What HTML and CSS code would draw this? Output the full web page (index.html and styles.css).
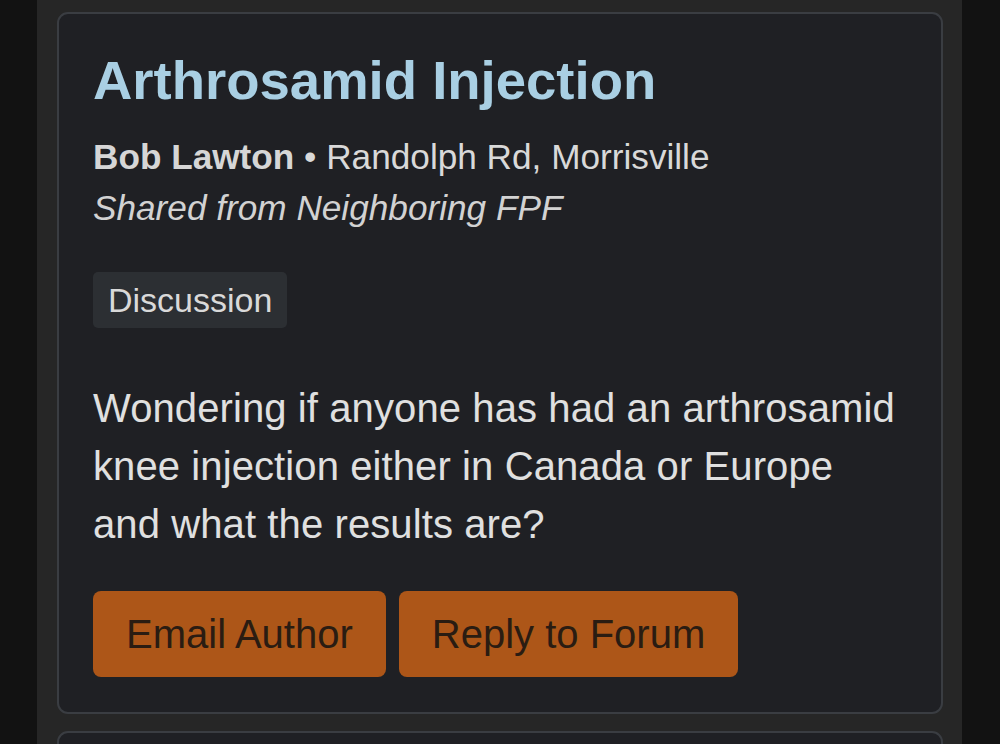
FILE: index.html
```html
<!DOCTYPE html>
<html lang="en">
<head>
  <meta charset="UTF-8">
  <meta name="viewport" content="width=device-width, initial-scale=1.0">
  <title>Arthrosamid Injection</title>
  <link rel="stylesheet" href="styles.css">
</head>
<body>
  <div class="feed">
    <div class="post">
      <h1 class="post-title">Arthrosamid Injection</h1>
      <div class="meta"><b>Bob Lawton</b> &bull; Randolph Rd, Morrisville</div>
      <div class="shared">Shared from Neighboring FPF</div>
      <span class="tag">Discussion</span>
      <p class="body-text">Wondering if anyone has had an arthrosamid knee injection either in Canada or Europe and what the results are?</p>
      <div class="actions">
        <button class="btn">Email Author</button>
        <button class="btn">Reply to Forum</button>
      </div>
    </div>
    <div class="post"></div>
  </div>
</body>
</html>
```

FILE: styles.css
```css
body {
  margin: 0;
  height: 744px;
  overflow: hidden;
  background-color: #121212;
  font-family: "Liberation Sans", Arial, sans-serif;
}

.feed {
  width: 925px;
  margin-left: 37px;
  min-height: 744px;
  padding: 12px 19px 0 20px;
  box-sizing: border-box;
  background-color: #262626;
  display: flex;
  flex-direction: column;
  gap: 17px;
}

.post {
  background-color: #1f2024;
  border: 2px solid #3a3d42;
  border-radius: 11px;
  padding: 34px 42px 35px 34px;
  min-height: 100px;
}

.post-title {
  margin: 0;
  font-size: 54.5px;
  line-height: 65px;
  font-weight: bold;
  color: #a9cfe3;
}

.meta {
  margin-top: 18px;
  font-size: 35.2px;
  line-height: 51px;
  color: #d9d9d9;
}

.meta b {
  color: #d6d6d6;
}

.shared {
  font-size: 35.2px;
  line-height: 51px;
  font-style: italic;
  color: #d2d2d2;
}

.tag {
  display: inline-block;
  margin-top: 39px;
  padding: 7px 15px;
  font-size: 34px;
  line-height: 42px;
  color: #d9d9d9;
  background-color: #2c2f33;
  border-radius: 5px;
}

.body-text {
  margin: 51px 0 0;
  font-size: 40px;
  line-height: 58px;
  letter-spacing: 0.1px;
  color: #e0e0e0;
}

.actions {
  margin-top: 38px;
  display: flex;
  gap: 13px;
}

.btn {
  font-family: inherit;
  font-size: 40px;
  line-height: 46px;
  padding: 20px 33px;
  border: none;
  border-radius: 8px;
  background-color: #ad5618;
  color: #2a1c12;
}
```
